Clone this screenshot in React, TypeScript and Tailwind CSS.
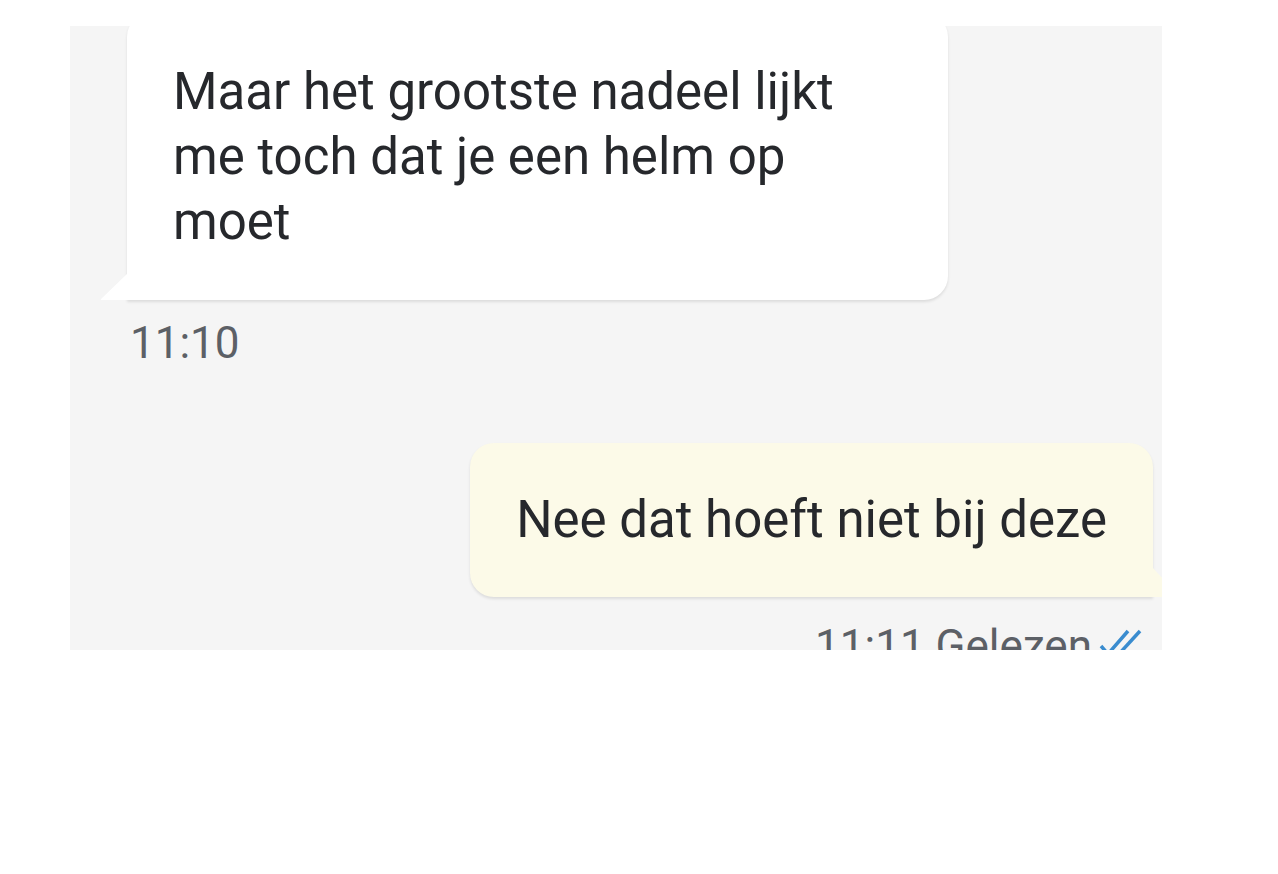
import React from "react";

const font = { fontFamily: "Roboto, 'Noto Sans', Arial, sans-serif" };

const DoubleCheck = () => (
  <svg width="48" height="30" viewBox="0 0 48 30" className="ml-[6px] mt-[4px] shrink-0">
    <path d="M3 18 L10 26 L30 3" fill="none" stroke="#3a8ccf" strokeWidth="3.5" />
    <path d="M21 26 L42 3" fill="none" stroke="#3a8ccf" strokeWidth="3.5" />
  </svg>
);

export default function App() {
  return (
    <div className="min-h-[874px] w-full bg-white pt-[26px]" style={font}>
      <div className="ml-[70px] flex h-[624px] w-[1092px] flex-col overflow-hidden bg-[#f5f5f5]">
        {/* incoming message */}
        <div className="relative -mt-[13px] ml-[57px] w-[821px] rounded-[24px] rounded-bl-none bg-white px-[46px] pb-[46px] pt-[46px] shadow-[0_2px_3px_rgba(0,0,0,0.10)]">
          <div className="absolute -left-[27px] bottom-0 h-[27px] w-[28px] bg-white [clip-path:polygon(100%_0,100%_100%,0_100%)] shadow-[0_2px_3px_rgba(0,0,0,0.10)]" />
          <p className="text-[51px] leading-[65px] text-[#26282c]">
            Maar het grootste nadeel lijkt
            <br />
            me toch dat je een helm op
            <br />
            moet
          </p>
        </div>
        <div className="ml-[60px] mt-[21px] text-[44px] leading-none text-[#5c6066]">11:10</div>

        {/* outgoing message */}
        <div className="relative mr-[9px] mt-[78px] self-end rounded-[24px] rounded-br-none bg-[#fcfae8] px-[46px] pb-[45px] pt-[44px] shadow-[0_2px_3px_rgba(0,0,0,0.10)]">
          <div className="absolute -right-[27px] bottom-0 h-[30px] w-[28px] bg-[#fcfae8] [clip-path:polygon(0_0,100%_100%,0_100%)]" />
          <p className="text-[51px] leading-[65px] text-[#26282c]">Nee dat hoeft niet bij deze</p>
        </div>
        <div className="mr-[16px] mt-[27px] flex items-start self-end text-[44px] leading-none text-[#5c6066]">
          <span>11:11 Gelezen</span>
          <DoubleCheck />
        </div>
      </div>
    </div>
  );
}
